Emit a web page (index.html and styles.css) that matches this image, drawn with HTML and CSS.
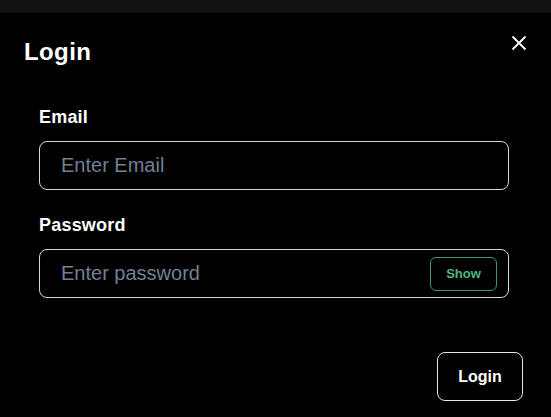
FILE: index.html
```html
<!DOCTYPE html>
<html lang="en">
<head>
<meta charset="utf-8">
<title>Login</title>
<link rel="stylesheet" href="styles.css">
</head>
<body>
<div class="topbar"></div>
<section class="modal">
  <header class="modal-header">
    <h1 class="title">Login</h1>
    <button class="close" aria-label="Close">
      <svg width="16" height="16" viewBox="0 0 16 16"><path d="M1.5 1.5 L14.5 14.5 M14.5 1.5 L1.5 14.5" stroke="#fff" stroke-width="1.8" fill="none"/></svg>
    </button>
  </header>
  <div class="modal-body">
    <label class="label">Email</label>
    <div class="field">
      <input class="input" type="email" placeholder="Enter Email">
    </div>
    <label class="label label-gap">Password</label>
    <div class="field">
      <input class="input" type="password" placeholder="Enter password">
      <button class="show">Show</button>
    </div>
  </div>
  <footer class="modal-footer">
    <button class="login">Login</button>
  </footer>
</section>
</body>
</html>
```
FILE: styles.css
```css
html, body {
  margin: 0;
  padding: 0;
  background: #000;
  font-family: "Liberation Sans", Arial, sans-serif;
  color: #fff;
}
.topbar {
  height: 13px;
  background: #121212;
}
.modal {
  position: relative;
  background: #000;
}
.modal-header {
  padding: 23px 24px 0 24px;
}
.title {
  margin: 0;
  font-size: 24px;
  line-height: 32px;
  font-weight: 700;
  letter-spacing: 0.4px;
  color: #fff;
}
.close {
  position: absolute;
  top: 14px;
  right: 16px;
  width: 32px;
  height: 32px;
  display: flex;
  align-items: center;
  justify-content: center;
  background: transparent;
  border: 0;
  padding: 0;
  cursor: pointer;
}
.modal-body {
  padding: 37px 42px 0 39px;
  display: flex;
  flex-direction: column;
}
.label {
  font-size: 18px;
  line-height: 24px;
  font-weight: 700;
  letter-spacing: 0.2px;
  margin-bottom: 12px;
}
.label-gap {
  margin-top: 23px;
}
.field {
  display: flex;
  align-items: center;
  height: 49px;
  box-sizing: border-box;
  border: 1px solid #d6d6d6;
  border-radius: 8px;
  padding: 0 11px 0 21px;
}
.input {
  flex: 1;
  min-width: 0;
  background: transparent;
  border: 0;
  outline: none;
  color: #fff;
  font-family: "Liberation Sans", Arial, sans-serif;
  font-size: 20px;
  padding: 0;
}
.input::placeholder {
  color: #718096;
  opacity: 1;
}
.show {
  width: 67px;
  height: 34px;
  box-sizing: border-box;
  background: transparent;
  border: 1px solid #3f9a63;
  border-radius: 6px;
  color: #4fb97c;
  font-family: "Liberation Sans", Arial, sans-serif;
  font-size: 13px;
  font-weight: 700;
  padding: 0;
}
.modal-footer {
  display: flex;
  justify-content: flex-end;
  padding: 54px 28px 16px 0;
}
.login {
  width: 86px;
  height: 49px;
  box-sizing: border-box;
  background: #000;
  border: 1px solid #e6e6e6;
  border-radius: 8px;
  color: #fff;
  font-family: "Liberation Sans", Arial, sans-serif;
  font-size: 16px;
  font-weight: 700;
  padding: 0;
}
```
